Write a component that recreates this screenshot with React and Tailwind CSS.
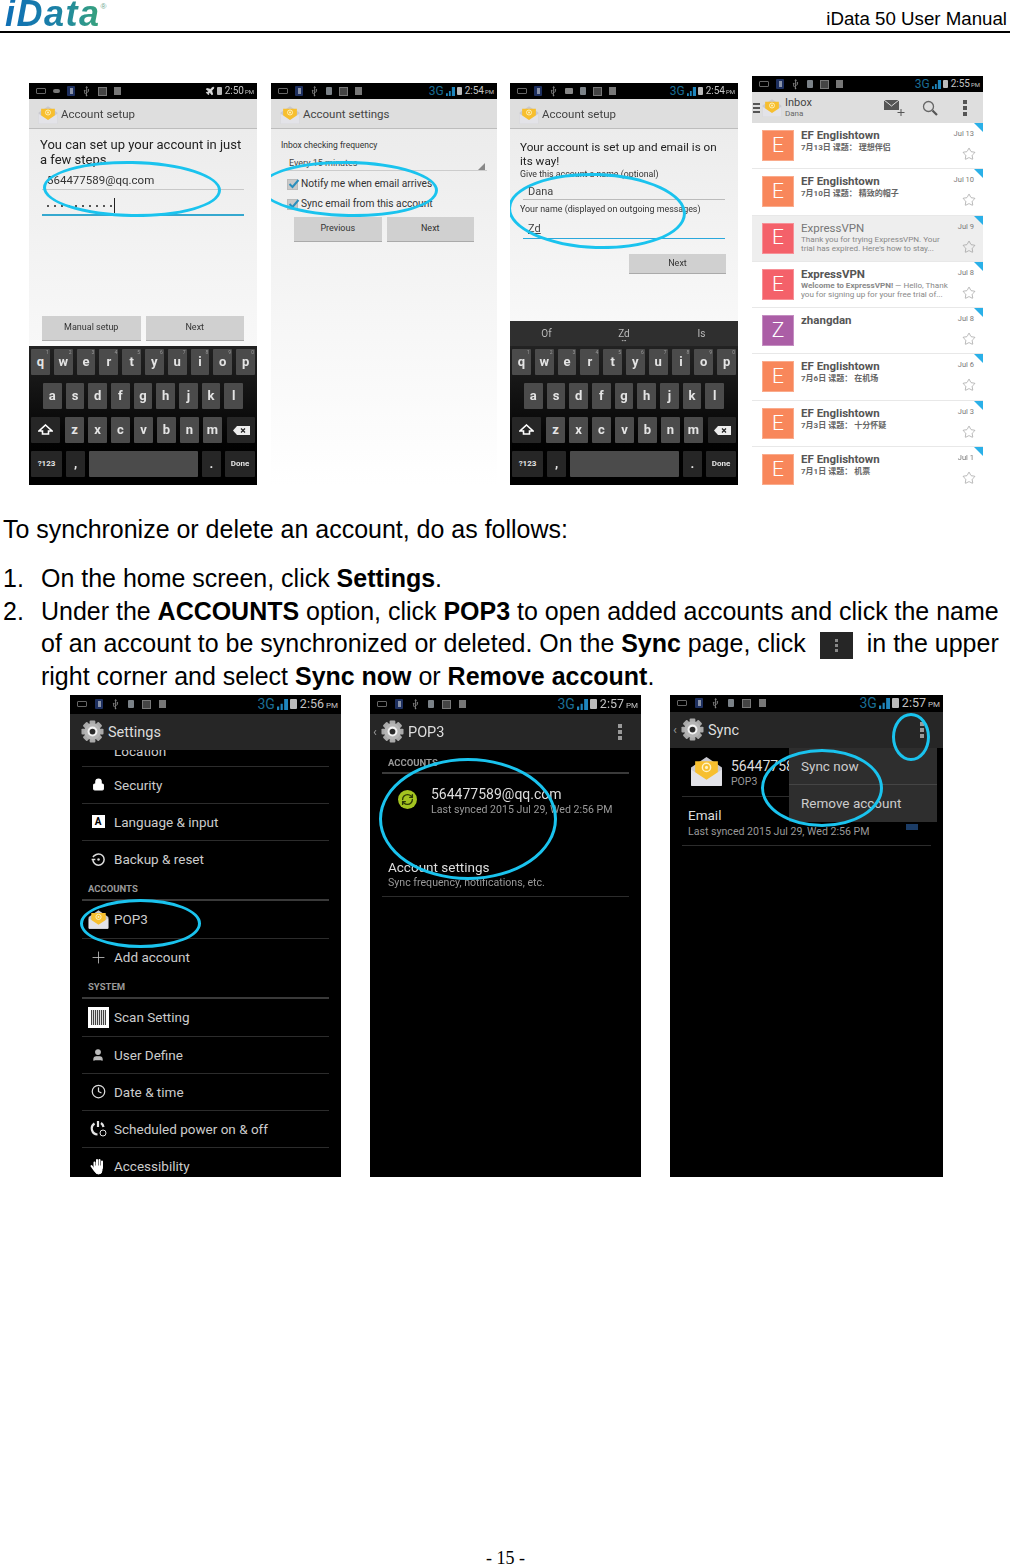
import React from 'react';
import { Usb, Plane, Star, Lock, Plus, Clock, RefreshCw, User } from 'lucide-react';

const ROW1 = 'qwertyuiop'.split('');
const ROW2 = 'asdfghjkl'.split('');
const ROW3 = 'zxcvbnm'.split('');
const PASSWORD = [0, 1, 2, 3, 4, 5, 6, 7, 8, 9];

function StatusBar({ time, g3 = true, plane = false, mail = false, className = 'h-[16px]', big = false }) {
  return (
    <div className={`flex items-center justify-between bg-black pl-[7px] pr-[3px] shrink-0 ${className}`}>
      <div className={`flex items-center ${big ? 'gap-[8px]' : 'gap-[7px]'}`}>
        <div className="w-[10px] h-[6px] border border-[#666] rounded-[1px]" />
        {plane && <div className="w-[7px] h-[4px] bg-[#777] rounded-[2px]" />}
        <div className="w-[8px] h-[10px] bg-[#1d2f5f] rounded-[1px] flex items-center justify-center"><div className="w-[3px] h-[6px] bg-[#8a93a8]" /></div>
        <Usb size={9} strokeWidth={2} className="text-[#888] -rotate-45" />
        {mail && <div className="w-[8px] h-[6px] bg-[#888] rounded-[1px]" />}
        {!plane && <div className="w-[6px] h-[8px] bg-[#7b8288] rounded-[1px]" />}
        <div className="w-[9px] h-[9px] border border-[#777] bg-[#444]" />
        <div className="w-[7px] h-[8px] bg-[#777]" />
      </div>
      <div className="flex items-center gap-[2px]">
        {plane && <Plane size={10} className="text-[#ddd] fill-[#ddd]" />}
        {g3 && <span className={`text-[#1a6d94] leading-none ${big ? 'text-[14px]' : 'text-[12px]'}`}>3G</span>}
        {g3 && (
          <svg width={big ? 11 : 9} height={big ? 11 : 9} viewBox="0 0 8 8">
            <path d="M0 8h1.600V5.500H0zM2.600 8h1.600V3.500H2.600zM5.200 8H8V0H5.200z" fill="#1f86bd" />
          </svg>
        )}
        <div className={`bg-[#bbb] rounded-[1px] ${big ? 'w-[7px] h-[10px]' : 'w-[5px] h-[8px]'}`} />
        <span className={`text-[#c4c4c4] leading-none ml-[1px] ${big ? 'text-[12.5px]' : 'text-[10px]'}`}>
          {time}<span className={big ? 'text-[8px] ml-[2px]' : 'text-[6px] ml-[1px]'}>PM</span>
        </span>
      </div>
    </div>
  );
}

function MailIcon({ size = 20 }) {
  return (
    <svg width={size} height={size} viewBox="0 0 32 30" className="shrink-0">
      <path d="M1 11 16 1l15 10v17a1 1 0 0 1-1 1H2a1 1 0 0 1-1-1z" fill="#c9c9d0" />
      <path d="M5 5h22v14l-11 6-11-6z" fill="#f7bf2f" />
      <circle cx="16" cy="11" r="4" fill="none" stroke="#fff3c4" strokeWidth="1.400" />
      <circle cx="16" cy="11" r="1.500" fill="#fff3c4" />
      <path d="M1 13l15 10 15-10v15a1 1 0 0 1-1 1H2a1 1 0 0 1-1-1z" fill="#e3e3e8" />
    </svg>
  );
}

function Gear() {
  const teeth = [0, 45, 90, 135];
  return (
    <svg width="23" height="23" viewBox="0 0 24 24" className="shrink-0">
      {teeth.map(a => <rect key={a} x="9" y="0.5" width="6" height="23" rx="1" fill="#a9a9a9" transform={`rotate(${a} 12 12)`} />)}
      <circle cx="12" cy="12" r="8.500" fill="#b5b5b5" />
      <circle cx="12" cy="12" r="5.200" fill="#f2f2f2" />
      <circle cx="12" cy="12" r="3" fill="#2a2a2a" />
    </svg>
  );
}

function Dots({ className = 'bg-[#9a9a9a]' }) {
  return (
    <div className="flex flex-col gap-[2px]">
      <div className={`w-[4px] h-[4px] ${className}`} />
      <div className={`w-[4px] h-[4px] ${className}`} />
      <div className={`w-[4px] h-[4px] ${className}`} />
    </div>
  );
}

function Key({ label, num, dark, small, className = 'flex-1' }) {
  return (
    <div className={`relative h-[26px] rounded-[1px] flex items-center justify-center font-bold text-[#e4e4e4] ${small ? 'text-[8px]' : 'text-[13px]'} ${dark ? 'bg-[#262626]' : 'bg-[#4b4b4b]'} ${className}`}>
      {num && <span className="absolute top-0 right-[1px] text-[5px] font-normal text-[#999] leading-[7px]">{num}</span>}
      {label}
    </div>
  );
}

function Keyboard() {
  return (
    <div className="h-[139px] shrink-0 bg-gradient-to-b from-[#222222] via-[#0c0c0c] to-black px-[2px] pt-[3px] flex flex-col gap-[8px]">
      <div className="flex gap-[4px]">
        {ROW1.map((k, i) => <Key key={k} label={k} num={String((i + 1) % 10)} />)}
      </div>
      <div className="flex gap-[4px] px-[12px]">
        {ROW2.map(k => <Key key={k} label={k} />)}
      </div>
      <div className="flex gap-[4px]">
        <Key dark className="w-[29px]" label={
          <svg width="15" height="13" viewBox="0 0 15 13"><path d="M7.500 1 14 7h-3.500v3h-6V7H1z" fill="none" stroke="#fff" strokeWidth="1.600" /></svg>
        } />
        <div className="flex gap-[4px] flex-1 px-[1px]">
          {ROW3.map(k => <Key key={k} label={k} />)}
        </div>
        <Key dark className="w-[28px]" label={
          <svg width="17" height="9" viewBox="0 0 17 9"><path d="M4 0h13v9H4L0 4.500z" fill="#eee" /><path d="M8 2.500l4 4m0-4l-4 4" stroke="#222" strokeWidth="1.200" /></svg>
        } />
      </div>
      <div className="flex gap-[4px]">
        <Key dark small className="w-[31px]" label="?123" />
        <Key dark className="w-[19px]" label="," />
        <Key className="flex-1" label="" />
        <Key dark className="w-[19px]" label="." />
        <Key dark small className="w-[30px]" label="Done" />
      </div>
    </div>
  );
}

function LightBar({ title }) {
  return (
    <div className="h-[30px] shrink-0 bg-[#dedede] border-b border-[#bdbdbd] flex items-center gap-[3px] pl-[9px] pt-[2px] text-[11.5px] text-[#444]">
      <MailIcon />
      <span>{title}</span>
    </div>
  );
}

function GrayButton({ children, className }) {
  return (
    <div className={`bg-[#d0d0d0] border-b border-[#aaa] flex items-center justify-center text-[9px] text-[#333] ${className}`}>{children}</div>
  );
}

function Ellipse({ className }) {
  return <div className={`absolute border-[3px] border-[#1ac3ee] rounded-[50%] ${className}`} />;
}

function Check({ label }) {
  return (
    <div className="flex items-center gap-[3px] h-[20px] pl-[16px] text-[10.2px] text-[#333]">
      <div className="relative w-[11px] h-[11px] bg-[#c9c9c9] border border-[#bbb]">
        <svg className="absolute -top-[2px] left-0" width="12" height="12" viewBox="0 0 12 12"><path d="M1.500 6l3 3 6-7" fill="none" stroke="#2a8fbd" strokeWidth="2" /></svg>
      </div>
      <span>{label}</span>
    </div>
  );
}

function SetupOne() {
  return (
    <div className="relative w-[228px] h-[402px] flex flex-col overflow-hidden">
      <StatusBar time="2:50" g3={false} plane />
      <LightBar title="Account setup" />
      <div className="flex-1 bg-gradient-to-b from-[#ececec] to-[#f8f8f8] flex flex-col pt-[9px]">
        <div className="px-[11px] text-[13px] leading-[14.500px] text-[#222]">You can set up your account in just<br />a few steps</div>
        <div className="mx-[13px] mt-[2px] h-[21px] border-b border-[#c8c8c8] pl-[5px] text-[11.500px] leading-[22px] text-[#333]">564477589@qq.com</div>
        <div className="mx-[13px] mt-[3px] h-[23px] border-b-2 border-[#35a8cf] pl-[5px] pt-[4px] flex items-center gap-[5px]">
          {PASSWORD.map(i => <span key={i} className="w-[2px] h-[2px] rounded-full bg-[#222]" />)}
          <span className="w-px h-[15px] bg-[#222] -ml-[3px]" />
        </div>
        <div className="mt-auto mb-[5px] mx-[13px] flex gap-[5px]">
          <GrayButton className="flex-1 h-[25px]">Manual setup</GrayButton>
          <GrayButton className="flex-1 h-[25px]">Next</GrayButton>
        </div>
      </div>
      <Keyboard />
      <Ellipse className="left-[14px] top-[78px] w-[178px] h-[56px] rotate-[1deg]" />
    </div>
  );
}

function SetupTwo() {
  return (
    <div className="relative w-[226px] h-[402px] flex flex-col overflow-hidden">
      <StatusBar time="2:54" />
      <LightBar title="Account settings" />
      <div className="flex-1 bg-gradient-to-b from-[#ececec] to-white flex flex-col pt-[10px]">
        <div className="pl-[10px] text-[8.500px] leading-[12px] text-[#333]">Inbox checking frequency</div>
        <div className="relative mx-[10px] mt-[5px] pl-[8px] h-[15px] border-b border-[#ccc] text-[9px] leading-[14px] text-[#444]">
          Every 15 minutes
          <div className="absolute right-[2px] bottom-0 w-0 h-0 border-l-[7px] border-l-transparent border-b-[7px] border-b-[#888]" />
        </div>
        <div className="mt-[3px]">
          <Check label="Notify me when email arrives" />
          <Check label="Sync email from this account" />
        </div>
        <div className="flex gap-[5px] px-[23px] mt-[3px]">
          <GrayButton className="w-[88px] h-[25px]">Previous</GrayButton>
          <GrayButton className="w-[88px] h-[25px]">Next</GrayButton>
        </div>
      </div>
      <Ellipse className="-left-[11px] top-[78px] w-[178px] h-[56px] rotate-[1deg]" />
    </div>
  );
}

function SetupThree() {
  return (
    <div className="relative w-[228px] h-[402px] flex flex-col overflow-hidden">
      <StatusBar time="2:54" mail />
      <LightBar title="Account setup" />
      <div className="flex-1 bg-gradient-to-b from-[#ececec] to-[#f8f8f8] flex flex-col pt-[11px]">
        <div className="px-[10px] text-[11.7px] leading-[14px] text-[#222]">Your account is set up and email is on<br />its way!</div>
        <div className="px-[10px] mt-[1px] text-[8.800px] leading-[11px] text-[#333]">Give this account a name (optional)</div>
        <div className="mx-[13px] mt-[2px] h-[18px] pl-[5px] border-b border-[#bbb] text-[11px] leading-[19px] text-[#444]">Dana</div>
        <div className="px-[10px] mt-[4px] text-[8.900px] leading-[11px] text-[#333]">Your name (displayed on outgoing messages)</div>
        <div className="mx-[13px] mt-[5px] h-[19px] pl-[5px] border-b border-[#2aa8dc] text-[11px] leading-[17px] text-[#444]"><span className="underline">Zd</span></div>
        <div className="flex justify-end mr-[12px] mt-[15px]">
          <GrayButton className="w-[97px] h-[20px]">Next</GrayButton>
        </div>
      </div>
      <div className="h-[25px] shrink-0 bg-[#2f2f2f] flex items-center text-[10px] text-[#bbb]">
        <span className="w-[73px] text-center">Of</span>
        <span className="relative flex-1 text-center">Zd<span className="absolute left-0 right-0 top-[12px] text-[5px] leading-[6px] text-[#ccc]">•••</span></span>
        <span className="w-[73px] text-center">Is</span>
      </div>
      <Keyboard />
      <Ellipse className="-left-[2px] top-[90px] w-[178px] h-[76px] rotate-[2deg]" />
    </div>
  );
}

const INBOX = [
  { name: 'EF Englishtown', sub: '7月13日 课题： 理想伴侣', date: 'Jul 13', letter: 'E', color: 'bg-[#f8875b]' },
  { name: 'EF Englishtown', sub: '7月10日 课题： 精致的帽子', date: 'Jul 10', letter: 'E', color: 'bg-[#f8875b]' },
  { name: 'ExpressVPN', two: ['Thank you for trying ExpressVPN. Your', "trial has expired. Here's how to stay..."], date: 'Jul 9', letter: 'E', color: 'bg-[#f4616a]', read: true },
  { name: 'ExpressVPN', two: [<><b>Welcome to ExpressVPN!</b> — Hello, Thank</>, 'you for signing up for your free trial of...'], date: 'Jul 8', letter: 'E', color: 'bg-[#f4616a]' },
  { name: 'zhangdan', date: 'Jul 8', letter: 'Z', color: 'bg-[#ab5ea6]' },
  { name: 'EF Englishtown', sub: '7月6日 课题： 在机场', date: 'Jul 6', letter: 'E', color: 'bg-[#f8875b]' },
  { name: 'EF Englishtown', sub: '7月3日 课题： 十分怀疑', date: 'Jul 3', letter: 'E', color: 'bg-[#f8875b]' },
  { name: 'EF Englishtown', sub: '7月1日 课题： 机票', date: 'Jul 1', letter: 'E', color: 'bg-[#f8875b]' },
];

function InboxRow({ item }) {
  return (
    <div className={`relative h-[46.300px] flex border-b border-[#e8e8e8] pl-[10px] pt-[7px] shrink-0 ${item.read ? 'bg-[#eeeeee]' : 'bg-white'}`}>
      <div className={`w-[32px] h-[31px] shrink-0 border border-white/30 flex items-center justify-center text-white text-[21px] font-light ${item.color}`}>{item.letter}</div>
      <div className="ml-[7px] -mt-[2px] min-w-0 flex-1 text-[#555]">
        <div className={`text-[11.500px] leading-[14px] ${item.read ? 'font-normal text-[#777]' : 'font-bold'}`}>{item.name}</div>
        {item.sub && <div className="text-[8px] leading-[11px] font-bold text-[#666]">{item.sub}</div>}
        {item.two && item.two.map((l, i) => <div key={i} className="text-[8.100px] leading-[9.500px] whitespace-nowrap text-[#888]">{l}</div>)}
      </div>
      <div className="absolute right-[9px] top-[5px] text-[7.500px] text-[#777]">{item.date}</div>
      <Star size={14} strokeWidth={1} className="absolute right-[7px] top-[24px] text-[#888]" />
      <div className="absolute right-0 top-0 w-0 h-0 border-l-[9px] border-l-transparent border-t-[9px] border-t-[#2ab0e8]" />
    </div>
  );
}

function InboxPhone() {
  return (
    <div className="w-[231px] h-[409px] flex flex-col overflow-hidden">
      <StatusBar time="2:55" />
      <div className="h-[31px] shrink-0 bg-[#dedede] flex items-center pl-[1px] pr-[16px] text-[#444]">
        <div className="flex flex-col gap-[2px] mr-[2px]">
          <div className="w-[7px] h-[2px] bg-[#555]" /><div className="w-[7px] h-[2px] bg-[#555]" /><div className="w-[7px] h-[2px] bg-[#555]" />
        </div>
        <MailIcon />
        <div className="ml-[3px] flex-1">
          <div className="text-[11px] leading-[12px]">Inbox</div>
          <div className="text-[8px] leading-[10px] text-[#666]">Dana</div>
        </div>
        <svg width="21" height="17" viewBox="0 0 21 17" className="mr-[17px]">
          <path d="M0 1h15v10H0z" fill="#555" /><path d="M0 1l7.500 6L15 1" fill="none" stroke="#ddd" /><path d="M17 10v7M13.500 13.500h7" stroke="#555" />
        </svg>
        <svg width="16" height="16" viewBox="0 0 16 16" className="mr-[25px]">
          <circle cx="6.500" cy="6.500" r="5" fill="none" stroke="#666" strokeWidth="1.300" /><path d="M10.500 10.500 15 15" stroke="#555" strokeWidth="2.200" />
        </svg>
        <Dots className="bg-[#555]" />
      </div>
      {INBOX.map((item, i) => <InboxRow key={i} item={item} />)}
    </div>
  );
}

function DarkBar({ title, back, menu }) {
  return (
    <div className="h-[36px] shrink-0 bg-[#262626] flex items-center text-[#ddd] text-[14.500px] pl-[3px] pr-[19px]">
      {back ? <span className="text-[#999] text-[13px] w-[8px]">‹</span> : <span className="w-[8px]" />}
      <Gear />
      <span className="ml-[4px] pt-[2px] flex-1">{title}</span>
      {menu && <Dots />}
    </div>
  );
}

function SettingRow({ icon, label, last, tall }) {
  return (
    <div className={`flex items-center shrink-0 mx-[12px] text-[13.500px] text-[#ccc] ${tall ? 'h-[38px]' : 'h-[37px]'} ${last ? '' : 'border-b border-[#2c2c2c]'}`}>
      <div className="w-[32px] flex justify-center shrink-0">{icon}</div>
      <span>{label}</span>
    </div>
  );
}

function GroupHead({ label }) {
  return <div className="mx-[12px] h-[23px] shrink-0 pl-[6px] border-b-2 border-[#3a3a3a] text-[9.500px] font-bold text-[#999] leading-[22px]">{label}</div>;
}

function SettingsPhone() {
  return (
    <div className="relative w-[271px] h-[482px] bg-black flex flex-col overflow-hidden">
      <StatusBar time="2:56" big className="h-[19px]" />
      <DarkBar title="Settings" />
      <div className="h-[17px] mx-[12px] overflow-hidden border-b border-[#2c2c2c] shrink-0 text-[13.500px] text-[#ccc] pl-[32px]"><div className="-mt-[9px]">Location</div></div>
      <SettingRow icon={<Lock size={13} className="text-white fill-white" />} label="Security" />
      <SettingRow icon={<div className="w-[13px] h-[13px] bg-white text-black text-[10px] font-bold leading-[13px] text-center">A</div>} label="Language & input" />
      <SettingRow icon={
        <svg width="15" height="15" viewBox="0 0 24 24" fill="none" stroke="#ddd" strokeWidth="2.400">
          <path d="M3 12a9 9 0 1 0 9-9 9.750 9.750 0 0 0-6.740 2.740L3 8" /><path d="M1 12h6" /><circle cx="12" cy="12" r="2" fill="#ddd" stroke="none" />
        </svg>
      } label="Backup & reset" last />
      <GroupHead label="ACCOUNTS" />
      <SettingRow icon={<MailIcon size={21} />} label="POP3" tall />
      <SettingRow icon={<Plus size={19} strokeWidth={1} className="text-[#ccc]" />} label="Add account" last />
      <GroupHead label="SYSTEM" />
      <SettingRow tall icon={
        <div className="w-[21px] h-[21px] bg-white flex items-center justify-center">
          <div className="w-[15px] h-[15px] bg-[repeating-linear-gradient(90deg,#444_0,#444_1px,#ddd_1px,#ddd_2px)]" />
        </div>
      } label="Scan Setting" />
      <SettingRow icon={<User size={14} className="text-[#bbb] fill-[#bbb]" />} label="User Define" />
      <SettingRow icon={<Clock size={15} className="text-[#ddd]" />} label="Date & time" />
      <SettingRow icon={
        <svg width="17" height="17" viewBox="0 0 17 17" fill="none" stroke="#e4e4e4" strokeWidth="2.200">
          <path d="M8 1v6" /><path d="M4.500 3.500a6 6 0 0 0 3 11" /><path d="M11 3a6 6 0 0 1 2.500 4" />
          <circle cx="13" cy="13" r="3" strokeWidth="1" />
        </svg>
      } label="Scheduled power on & off" />
      <SettingRow icon={
        <svg width="17" height="17" viewBox="0 0 17 17" fill="none" stroke="#fff" strokeLinecap="round">
          <path d="M4.500 4.500v6M7 2v7M9.500 2v7M12 3.500v6.500" strokeWidth="2" />
          <path d="M1.500 8 5 13" strokeWidth="2" />
          <path d="M5 8h7v4.500a3.500 3.500 0 0 1-3.500 3.500 3.500 3.500 0 0 1-3.500-3z" fill="#fff" strokeWidth="1" />
        </svg>
      } label="Accessibility" last />
      <Ellipse className="left-[10px] top-[204px] w-[121px] h-[49px]" />
    </div>
  );
}

function Pop3Phone() {
  return (
    <div className="relative w-[271px] h-[482px] bg-black flex flex-col overflow-hidden">
      <StatusBar time="2:57" big className="h-[19px]" />
      <DarkBar title="POP3" back menu />
      <div className="mx-[12px] h-[24px] shrink-0 pl-[6px] border-b-2 border-[#3a3a3a] text-[9.500px] font-bold text-[#999] leading-[25px]">ACCOUNTS</div>
      <div className="flex mx-[12px] pt-[11px] h-[84px] shrink-0">
        <div className="w-[49px] flex justify-center pt-[5px] pl-[2px] shrink-0">
          <div className="w-[19px] h-[19px] rounded-full bg-[#a4c520] flex items-center justify-center"><RefreshCw size={13} strokeWidth={2.500} className="text-[#2c3a05]" /></div>
        </div>
        <div>
          <div className="text-[14px] leading-[18px] text-[#ddd]">564477589@qq.com</div>
          <div className="text-[10.600px] leading-[14px] text-[#999]">Last synced 2015 Jul 29, Wed 2:56 PM</div>
        </div>
      </div>
      <div className="mx-[12px] pl-[6px] h-[39px] shrink-0 border-b border-[#2c2c2c]">
        <div className="text-[13.500px] leading-[18px] text-[#ddd]">Account settings</div>
        <div className="text-[10.600px] leading-[14px] text-[#999]">Sync frequency, notifications, etc.</div>
      </div>
      <Ellipse className="left-[9px] top-[63px] w-[178px] h-[122px]" />
    </div>
  );
}

function SyncPhone() {
  return (
    <div className="relative w-[273px] h-[482px] bg-black flex flex-col overflow-hidden">
      <StatusBar time="2:57" big className="h-[17px]" />
      <DarkBar title="Sync" back menu />
      <div className="mx-[12px] h-[49px] shrink-0 flex items-center border-b border-[#2c2c2c]">
        <div className="w-[44px] flex justify-end pr-[3px]"><MailIcon size={33} /></div>
        <div className="ml-[5px] pt-[2px]">
          <div className="text-[14px] leading-[18px] text-[#ddd]">564477589@qq.com</div>
          <div className="text-[10.500px] leading-[13px] text-[#999]">POP3</div>
        </div>
      </div>
      <div className="mx-[12px] h-[49px] shrink-0 pl-[6px] pt-[9px] border-b border-[#2c2c2c]">
        <div className="text-[13.500px] leading-[18px] text-[#ddd]">Email</div>
        <div className="text-[10.600px] leading-[15px] text-[#999]">Last synced 2015 Jul 29, Wed 2:56 PM</div>
      </div>
      <div className="absolute left-[119px] top-[53px] w-[148px] h-[74px] bg-[#2e2e2e] text-[13.500px] text-[#ccc]">
        <div className="h-[37px] pl-[12px] pt-[1px] flex items-center border-b border-[#454545]">Sync now</div>
        <div className="h-[37px] pl-[12px] flex items-center">Remove account</div>
      </div>
      <div className="absolute left-[236px] top-[129px] w-[12px] h-[6px] bg-[#1b3c66]" />
      <Ellipse className="left-[91px] top-[54px] w-[122px] h-[78px]" />
      <Ellipse className="left-[222px] top-[18px] w-[38px] h-[48px]" />
    </div>
  );
}

export default function App() {
  return (
    <div className="relative h-[1565px] w-[1010px] bg-white flex flex-col font-['Liberation_Sans',sans-serif] text-black overflow-hidden">
      <header className="h-[33px] shrink-0 border-b-2 border-black flex justify-between pl-[5px] pr-[3px]">
        <div className="flex items-start">
          <span className="italic font-bold text-[36px] leading-[28px] tracking-[1.500px] bg-gradient-to-r from-[#0f6fb5] via-[#1a7fa8] to-[#3aa37a] bg-clip-text text-transparent">iData</span>
          <span className="text-[8px] leading-[10px] mt-[2px] text-[#6aa88f]">®</span>
        </div>
        <span className="text-[18.700px] leading-[23px] mt-[7px]">iData 50 User Manual</span>
      </header>

      <div className="flex items-end pl-[29px] mt-[43px] blur-[0.3px] font-['Roboto','Noto_Sans_CJK_SC',sans-serif]">
        <SetupOne />
        <div className="ml-[14px]"><SetupTwo /></div>
        <div className="ml-[13px]"><SetupThree /></div>
        <div className="ml-[14px]"><InboxPhone /></div>
      </div>

      <p className="text-[24.970px] leading-[33px] mt-[28px] pl-[3px]">To synchronize or delete an account, do as follows:</p>

      <ol className="text-[24.970px] leading-[32.700px] pl-[3px] pr-[8px] mt-[16px]">
        <li className="flex">
          <span className="w-[38px] shrink-0">1.</span>
          <span>On the home screen, click <b>Settings</b>.</span>
        </li>
        <li className="flex">
          <span className="w-[38px] shrink-0">2.</span>
          <span>
            Under the <b>ACCOUNTS</b> option, click <b>POP3</b> to open added accounts and click the name of an account to be synchronized or deleted. On the <b>Sync</b> page, click
            <span className="inline-flex align-middle -my-[8px] w-[33px] h-[27px] mx-[14px] bg-[#262626] items-center justify-center">
              <span className="flex flex-col gap-[2px]">
                <span className="w-[3px] h-[3px] bg-[#888]" /><span className="w-[3px] h-[3px] bg-[#888]" /><span className="w-[3px] h-[3px] bg-[#888]" />
              </span>
            </span>
            in the upper right corner and select <b>Sync now</b> or <b>Remove account</b>.
          </span>
        </li>
      </ol>

      <div className="flex pl-[70px] gap-[29px] mt-[2px] blur-[0.3px] font-['Roboto',sans-serif]">
        <SettingsPhone />
        <Pop3Phone />
        <SyncPhone />
      </div>

      <footer className="mt-auto h-[14px] text-center text-[18px] leading-[14px] font-['Liberation_Serif',serif] pl-[1px]">- 15 -</footer>
    </div>
  );
}
